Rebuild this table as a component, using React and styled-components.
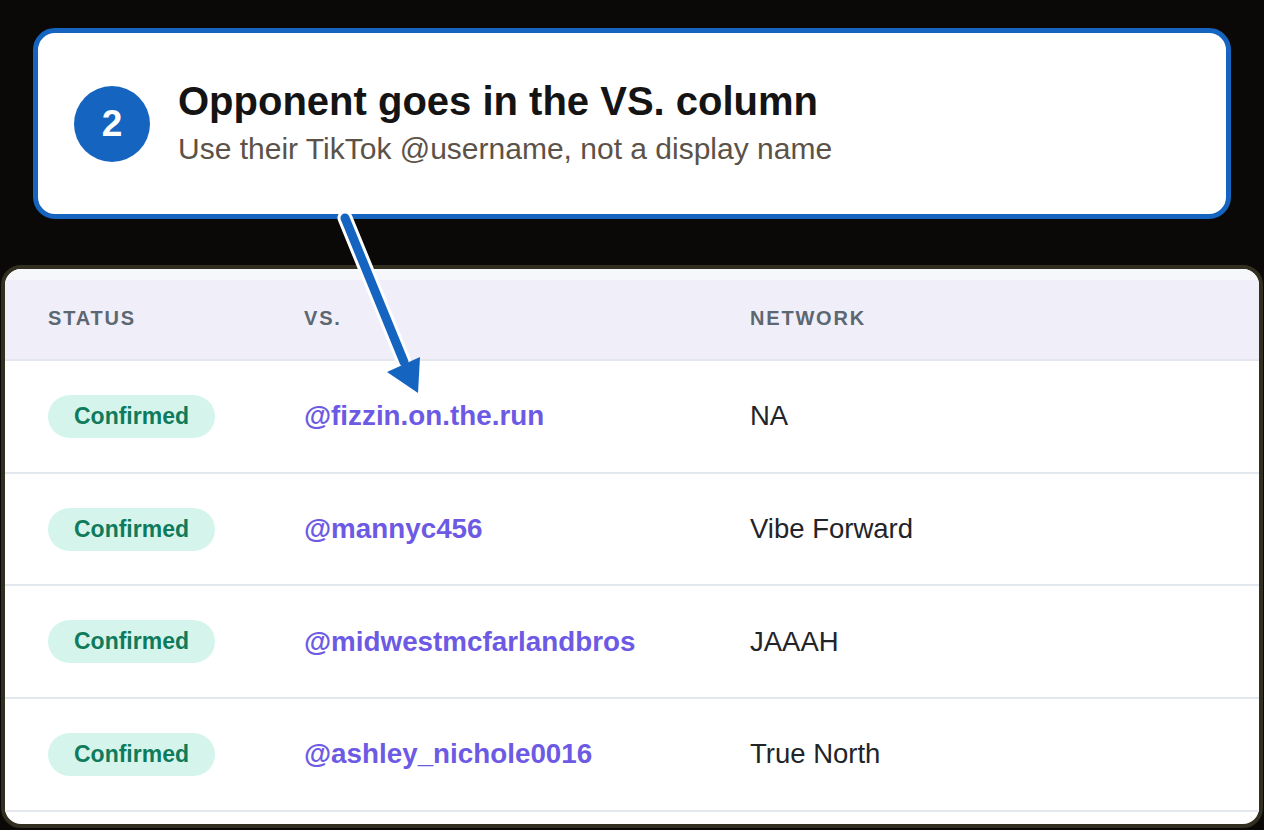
import styled, { createGlobalStyle } from "styled-components";

const GlobalStyle = createGlobalStyle`
  html, body {
    margin: 0;
    padding: 0;
    background: #0a0908;
  }
  body {
    font-family: "Liberation Sans", Arial, sans-serif;
  }
`;

const Page = styled.div`
  position: relative;
  width: 1264px;
  height: 830px;
  overflow: hidden;
  padding-top: 28px;
  box-sizing: border-box;
`;

const Callout = styled.div`
  margin: 0 33px;
  height: 191px;
  box-sizing: border-box;
  border: 5px solid #1565c0;
  border-radius: 22px;
  background: #ffffff;
  display: flex;
  align-items: center;
  gap: 28px;
  padding: 0 36px;
`;

const StepBadge = styled.div`
  width: 76px;
  height: 76px;
  flex: none;
  border-radius: 50%;
  background: #1565c0;
  color: #ffffff;
  font-size: 37px;
  font-weight: 700;
  display: flex;
  align-items: center;
  justify-content: center;
`;

const CalloutText = styled.div`
  display: flex;
  flex-direction: column;
  gap: 7px;
  margin-bottom: 2px;
`;

const Title = styled.h2`
  margin: 0;
  font-size: 40px;
  line-height: 46px;
  font-weight: 700;
  color: #141414;
`;

const Subtitle = styled.p`
  margin: 0;
  font-size: 30px;
  line-height: 36px;
  color: #5c5248;
`;

const Card = styled.section`
  margin: 46px 1px 0;
  height: 563px;
  box-sizing: border-box;
  border: 4px solid #322e20;
  border-radius: 20px;
  background: #ffffff;
  overflow: hidden;
  padding-bottom: 11px;
`;

const Row = styled.div`
  display: grid;
  grid-template-columns: 256px 446px 1fr;
  align-items: center;
  padding-left: 43px;
  padding-top: ${(p) => (p.$head ? 8 : 0)}px;
  box-sizing: border-box;
  height: ${(p) => p.$height}px;
  border-bottom: 2px solid #e3e8ee;
  background: ${(p) =>
    p.$head ? "linear-gradient(#f6f7fb 0 11px, #f0eff9 11px)" : "#ffffff"};
`;

const HeadCell = styled.div`
  font-size: 20px;
  font-weight: 700;
  letter-spacing: 1.8px;
  color: #5c6771;
  text-transform: uppercase;
`;

const Status = styled.span`
  display: inline-flex;
  align-items: center;
  justify-content: center;
  width: 167px;
  height: 43px;
  border-radius: 22px;
  background: #d5f5ec;
  color: #0f7b5c;
  font-size: 23px;
  font-weight: 700;
`;

const Handle = styled.div`
  font-size: 27.8px;
  font-weight: 700;
  color: #6d5ae4;
`;

const Network = styled.div`
  font-size: 27.5px;
  color: #222428;
`;

const Overlay = styled.svg`
  position: absolute;
  left: 0;
  top: 0;
  pointer-events: none;
`;

const rows = [
  { vs: "@fizzin.on.the.run", net: "NA" },
  { vs: "@mannyc456", net: "Vibe Forward" },
  { vs: "@midwestmcfarlandbros", net: "JAAAH" },
  { vs: "@ashley_nichole0016", net: "True North" },
];

export default function App() {
  return (
    <>
      <GlobalStyle />
      <Page>
        <Callout>
          <StepBadge>2</StepBadge>
          <CalloutText>
            <Title>Opponent goes in the VS. column</Title>
            <Subtitle>Use their TikTok @username, not a display name</Subtitle>
          </CalloutText>
        </Callout>
        <Card>
          <Row $head $height={92}>
            <HeadCell>Status</HeadCell>
            <HeadCell>VS.</HeadCell>
            <HeadCell>Network</HeadCell>
          </Row>
          {rows.map((r) => (
            <Row key={r.vs} $height={112.7}>
              <div>
                <Status>Confirmed</Status>
              </div>
              <Handle>{r.vs}</Handle>
              <Network>{r.net}</Network>
            </Row>
          ))}
        </Card>
        <Overlay width="1264" height="830" viewBox="0 0 1264 830">
          <line x1="345" y1="218" x2="404" y2="362" stroke="#ffffff" strokeWidth="15" strokeLinecap="round" />
          <line x1="345" y1="218" x2="404" y2="362" stroke="#1565c0" strokeWidth="9" strokeLinecap="round" />
          <polygon points="418,393 387,372 420,357" fill="#1565c0" />
        </Overlay>
      </Page>
    </>
  );
}
